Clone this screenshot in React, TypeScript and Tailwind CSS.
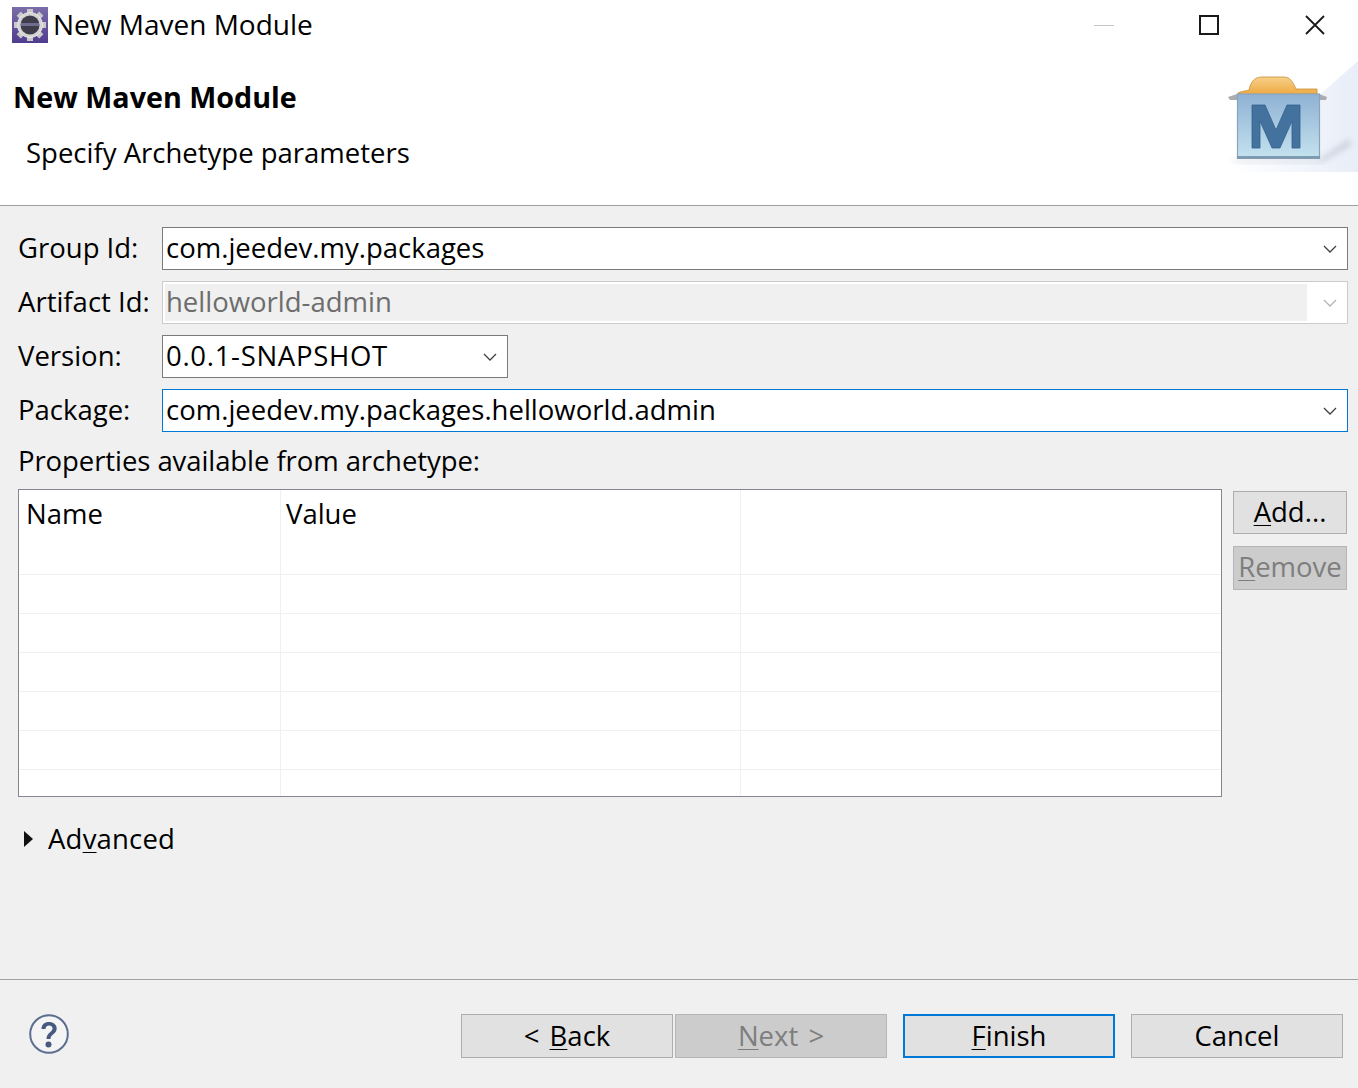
import type { ReactNode } from 'react'

function Chevron({ muted }: { muted?: boolean }) {
  return (
    <svg width="14" height="8" viewBox="0 0 14 8" fill="none" className="shrink-0">
      <path d="M1 1l6 6 6-6" stroke={muted ? '#b4b4b4' : '#404040'} strokeWidth="1.3" />
    </svg>
  )
}

function Combo({ value, width, focused, disabled, textClass }: { value: string; width?: string; focused?: boolean; disabled?: boolean; textClass?: string }) {
  const border = focused ? 'border-[#0078d7]' : disabled ? 'border-[#cccccc]' : 'border-[#7a7a7a]'
  return (
    <div className={`h-[43px] border ${border} bg-white flex items-center ${width ?? 'flex-1'} ${disabled ? 'pl-[2px] py-[2px]' : 'pl-[3px]'}`}>
      <div className={`flex-1 h-full flex items-center pb-[2px] ${textClass ?? ''} ${disabled ? 'bg-[#f0f0f0] text-[#6d6d6d] pl-[1px]' : 'text-black'}`}>{value}</div>
      <div className="w-[40px] flex justify-center items-center pl-[5px]"><Chevron muted={disabled} /></div>
    </div>
  )
}

function Row({ label, children }: { label: string; children: ReactNode }) {
  return (
    <div className="flex items-center">
      <div className="w-[144px] shrink-0 text-black pb-[2px]">{label}</div>
      {children}
    </div>
  )
}

function Btn({ children, disabled, primary, className }: { children: ReactNode; disabled?: boolean; primary?: boolean; className?: string }) {
  const look = primary
    ? 'border-2 border-[#0078d7] bg-[#e1e1e1] text-black'
    : disabled
      ? 'border border-[#b5b5b5] bg-[#cccccc] text-[#7e7e7e]'
      : 'border border-[#adadad] bg-[#e1e1e1] text-black'
  return <div className={`flex items-center justify-center ${look} ${className ?? ''}`}>{children}</div>
}

function MavenIcon() {
  return (
    <svg width="136" height="112" viewBox="0 0 136 112" className="block">
      <defs>
        <linearGradient id="bg" x1="1" y1="0" x2="0" y2="0">
          <stop offset="0" stopColor="#e8edf8" />
          <stop offset="1" stopColor="#ffffff" />
        </linearGradient>
        <linearGradient id="box" x1="0" y1="0" x2="0" y2="1">
          <stop offset="0" stopColor="#8fb2d4" />
          <stop offset="1" stopColor="#c4e2ee" />
        </linearGradient>
        <linearGradient id="lid" x1="0" y1="0" x2="0" y2="1">
          <stop offset="0" stopColor="#f7d08a" />
          <stop offset="1" stopColor="#eda83e" />
        </linearGradient>
        <filter id="soft"><feGaussianBlur stdDeviation="3" /></filter>
      </defs>
      <path d="M136 0V111H10Z" fill="url(#bg)" />
      <path d="M10 99H97L128 78L128 84L100 101H14Z" fill="#8f97a8" opacity="0.45" filter="url(#soft)" />
      <path d="M6 36L15 33V39H8ZM97 33L105 36L104 39H97Z" fill="#a9acb0" />
      <path d="M16 32C20 30 24 30 27 29C29 20 33 16 40 16H62C68 16 71 21 74 28H95V34H16Z" fill="url(#lid)" stroke="#c98e36" strokeWidth="0.8" />
      <rect x="15.500" y="33" width="82" height="64" fill="url(#box)" stroke="#8aa3bb" strokeWidth="1.2" />
      <path d="M30 87V44H43L54 69L65 44H78V87H70V60L58 87H50L38 60V87Z" fill="#44729f" stroke="#34618e" strokeWidth="0.8" />
      <rect x="15" y="95" width="83" height="3" fill="#7f9bb1" />
    </svg>
  )
}

function AppIcon() {
  const teeth = [0, 45, 90, 135, 180, 225, 270, 315]
  return (
    <svg width="36" height="36" viewBox="0 0 36 36" className="block shrink-0">
      <defs>
        <linearGradient id="purple" x1="0" y1="0" x2="0" y2="1">
          <stop offset="0" stopColor="#7a6da8" />
          <stop offset="1" stopColor="#503c8e" />
        </linearGradient>
      </defs>
      <rect width="36" height="36" fill="url(#purple)" />
      {teeth.map(a => (
        <rect key={a} x="15" y="2" width="6" height="8" fill="#c9c9c9" transform={`rotate(${a} 18 18)`} />
      ))}
      <circle cx="18" cy="18" r="12.500" fill="#d4d4d4" stroke="#e8e8e8" />
      <circle cx="18" cy="18" r="9.500" fill="#3f3c4c" />
      <rect x="9" y="16" width="18" height="3" fill="#6f6d90" />
    </svg>
  )
}

export default function App() {
  return (
    <div className="w-[1358px] h-[1088px] flex flex-col bg-[#f0f0f0] overflow-hidden font-['Open_Sans','Noto_Sans',sans-serif] text-[27.5px] leading-[36px] text-black">
      {/* Title bar + banner */}
      <div className="h-[206px] shrink-0 bg-white border-b border-[#a0a0a0] relative">
        <div className="h-[50px] flex items-center pl-[12px] text-[28px]">
          <AppIcon />
          <span className="ml-[5px] pb-[2px]">New Maven Module</span>
          <div className="ml-auto flex items-center">
            <div className="w-[20px] h-[1px] bg-[#c4c4c4] mr-[85px]" />
            <div className="w-[20px] h-[20px] border-2 border-[#1a1a1a] mr-[86px]" />
            <svg width="20" height="20" viewBox="0 0 20 20" className="mr-[33px]">
              <path d="M1 1l18 18M19 1L1 19" stroke="#1a1a1a" strokeWidth="1.8" />
            </svg>
          </div>
        </div>
        <div className="pl-[13px] pt-[27px] font-bold text-[28.7px] leading-[40px]">New Maven Module</div>
        <div className="pl-[26px] pt-[18px]">Specify Archetype parameters</div>
        <div className="absolute right-0 top-[61px]"><MavenIcon /></div>
      </div>

      {/* Form */}
      <div className="flex-1 flex flex-col pl-[18px] pr-[10px] pt-[21px]">
        <div className="flex flex-col gap-[11px]">
          <Row label="Group Id:"><Combo value="com.jeedev.my.packages" /></Row>
          <Row label="Artifact Id:"><Combo value="helloworld-admin" disabled /></Row>
          <Row label="Version:"><Combo value="0.0.1-SNAPSHOT" width="w-[346px]" textClass="tracking-[0.7px]" /></Row>
          <Row label="Package:"><Combo value="com.jeedev.my.packages.helloworld.admin" focused /></Row>
        </div>
        <div className="mt-[11px] h-[36px] tracking-[-0.08px]">Properties available from archetype:</div>

        <div className="flex mt-[10px]">
          <div className="w-[1204px] h-[308px] border border-[#828790] bg-white overflow-hidden flex flex-col">
            <div className="h-[85px] shrink-0 grid grid-cols-[262px_460px_1fr] border-b border-[#f0f0f0]">
              <div className="border-r border-[#f0f0f0] pl-[7px] pt-[6px]">Name</div>
              <div className="border-r border-[#f0f0f0] pl-[5px] pt-[6px]">Value</div>
              <div />
            </div>
            {[0, 1, 2, 3, 4, 5].map(i => (
              <div key={i} className={`h-[39px] shrink-0 grid grid-cols-[262px_460px_1fr] ${i < 5 ? 'border-b border-[#f0f0f0]' : ''}`}>
                <div className="border-r border-[#f0f0f0]" />
                <div className="border-r border-[#f0f0f0]" />
                <div />
              </div>
            ))}
          </div>
          <div className="ml-[11px] pt-[2px] flex flex-col gap-[12px]">
            <Btn className="w-[114px] h-[43px] pb-[2px]"><span><u className="underline underline-offset-[3px] decoration-1">A</u>dd...</span></Btn>
            <Btn disabled className="w-[114px] h-[44px] pb-[2px]"><span><u className="underline underline-offset-[3px] decoration-1">R</u>emove</span></Btn>
          </div>
        </div>

        <div className="flex items-center mt-[24px] h-[36px]">
          <svg width="9" height="16" viewBox="0 0 9 16" className="ml-[6px]"><path d="M0 0l9 8-9 8z" fill="#111" /></svg>
          <span className="ml-[15px] tracking-[0.2px]">Ad<u className="underline underline-offset-[3px] decoration-1">v</u>anced</span>
        </div>
      </div>

      {/* Footer */}
      <div className="h-[109px] shrink-0 border-t border-[#a0a0a0] flex items-start pt-[34px] pl-[29px] pr-[15px]">
        <svg width="40" height="40" viewBox="0 0 40 40" className="shrink-0">
          <circle cx="20" cy="20" r="18.800" fill="#f4f4f4" stroke="#5b6e8f" strokeWidth="2" />
          <path d="M12.500 15c0-4.500 3.200-7 7.500-7s7.700 2.500 7.700 6.500c0 5.500-6.200 5.500-6.200 10.500h-4c0-6.500 6-6.800 6-10.500 0-1.800-1.500-3-3.500-3s-3.500 1.300-3.500 3.500z" fill="#465a80" />
          <circle cx="19.500" cy="30.500" r="3" fill="#465a80" />
        </svg>
        <div className="ml-auto flex">
          <Btn className="w-[212px] h-[44px]"><span className="[word-spacing:3px]">&lt; <u className="underline underline-offset-[3px] decoration-1">B</u>ack</span></Btn>
          <Btn disabled className="w-[212px] h-[44px] ml-[2px]"><span className="[word-spacing:3px]"><u className="underline underline-offset-[3px] decoration-1">N</u>ext &gt;</span></Btn>
          <Btn primary className="w-[212px] h-[44px] ml-[16px]"><span><u className="underline underline-offset-[3px] decoration-1">F</u>inish</span></Btn>
          <Btn className="w-[212px] h-[44px] ml-[16px]">Cancel</Btn>
        </div>
      </div>
    </div>
  )
}
